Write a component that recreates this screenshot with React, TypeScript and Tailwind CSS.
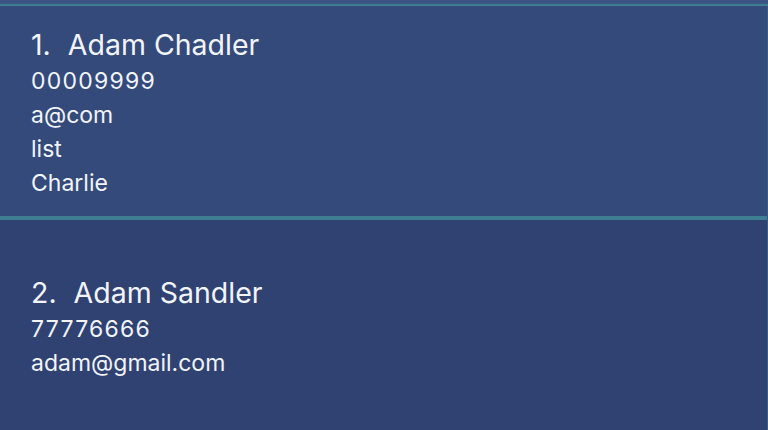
const people = [
  { name: "Adam Chadler", phone: "00009999", fields: ["a@com", "list", "Charlie"] },
  { name: "Adam Sandler", phone: "77776666", fields: ["adam@gmail.com"] },
]

export default function App() {
  return (
    <main
      className="h-[430px] w-[768px] overflow-hidden bg-[#2f4272] text-[#f2f4f8]"
      style={{ fontFamily: "Inter, 'Noto Sans', sans-serif" }}
    >
      <div className="h-1 bg-[#3b5585]" />
      <div className="h-0.5 bg-[#3f7d93]" />
      <ul className="border-r border-[#3a5a88]">
        {people.map((p, i) => (
          <li
            key={p.name}
            className={
              i === 0
                ? "flex h-[214px] flex-col justify-center border-b-4 border-[#3f7d93] bg-[#344a7b] px-[31px] pt-[3px]"
                : "flex h-[210px] flex-col justify-center bg-[#2f4272] px-[31px] pt-[3px]"
            }
          >
            <div className="flex gap-[17px] text-[28.5px] leading-[38px]">
              <span>{i + 1}.</span>
              <span>{p.name}</span>
            </div>
            <div className="text-[23px] leading-[34px] tracking-[1.25px]">{p.phone}</div>
            {p.fields.map((f) => (
              <div key={f} className="text-[23px] leading-[34px]">
                {f}
              </div>
            ))}
          </li>
        ))}
      </ul>
    </main>
  )
}
